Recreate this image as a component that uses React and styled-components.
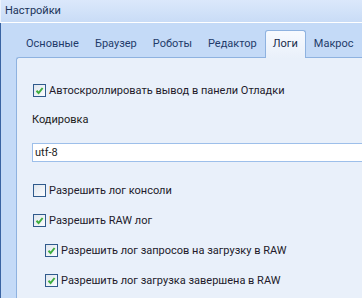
import React from 'react';
import styled, { createGlobalStyle } from 'styled-components';

const Global = createGlobalStyle`
    html, body { margin: 0; padding: 0; }
    body {
        width: 362px;
        height: 298px;
        overflow: hidden;
        background: #e9f0fa;
        font-family: Roboto, "Liberation Sans", sans-serif;
        font-size: 11px;
        color: #222;
    }
`;

const tabs = ['Основные', 'Браузер', 'Роботы', 'Редактор', 'Логи', 'Макрос'];

const Check = ({ checked }) => (
    <Box>
        {checked && (
            <svg width="9" height="9" viewBox="0 0 9 9">
                <path d="M1.5 4.8 L3.6 7 L7.6 2" fill="none" stroke="#3fae3f" strokeWidth="2" />
            </svg>
        )}
    </Box>
);

const Option = ({ checked, nested, children }) => (
    <Row nested={nested}>
        <Check checked={checked} />
        <Label>{children}</Label>
    </Row>
);

export default () => {
    return (
        <Window>
            <Global />
            <TitleBar>Настройки</TitleBar>
            <Body>
                <TabStrip>
                    {tabs.map(tab => (
                        <Tab key={tab} active={tab === 'Логи'}>
                            {tab}
                        </Tab>
                    ))}
                </TabStrip>
                <Panel>
                    <Option checked>Автоскроллировать вывод в панели Отладки</Option>
                    <Caption>Кодировка</Caption>
                    <Input>utf-8</Input>
                    <Option>Разрешить лог консоли</Option>
                    <Option checked>Разрешить RAW лог</Option>
                    <Option checked nested>
                        Разрешить лог запросов на загрузку в RAW
                    </Option>
                    <Option checked nested>
                        Разрешить лог загрузка завершена в RAW
                    </Option>
                </Panel>
            </Body>
        </Window>
    );
};

const Window = styled.div`
    display: flex;
    flex-direction: column;
    width: 362px;
    height: 298px;
    overflow: hidden;
`;

const TitleBar = styled.div`
    height: 23px;
    flex: none;
    box-sizing: border-box;
    padding: 2px 0 0 4px;
    line-height: 18px;
    color: #1b3358;
    background: linear-gradient(#dbe8fb, #c9dcf6);
    border-left: 1px solid #edf3fc;
    border-bottom: 1px solid #ffffff;
`;

const Body = styled.div`
    flex: 1;
    display: flex;
    flex-direction: column;
    background: #c4daf7;
    border-left: 1px solid #3a64a3;
    padding-left: 15px;
`;

const TabStrip = styled.div`
    display: flex;
    align-items: flex-end;
    height: 34px;
    padding-left: 2px;
    flex: none;
`;

const Tab = styled.div`
    box-sizing: border-box;
    height: ${p => (p.active ? '28px' : '26px')};
    padding: 0 7px;
    margin-bottom: ${p => (p.active ? '-1px' : '0')};
    line-height: ${p => (p.active ? '26px' : '24px')};
    color: ${p => (p.active ? '#15294a' : '#1f3a6a')};
    white-space: nowrap;
    border: 1px solid ${p => (p.active ? '#8eb2e0' : 'transparent')};
    border-bottom: none;
    border-radius: 3px 3px 0 0;
    background: ${p => (p.active ? 'linear-gradient(#f7faff, #e9f0fa)' : 'transparent')};
    position: relative;
    z-index: 1;
`;

const Panel = styled.div`
    flex: 1;
    background: #e9f0fa;
    border-left: 1px solid #8eb2e0;
    border-top: 1px solid #8eb2e0;
    border-top-left-radius: 3px;
    padding: 17px 0 0 15px;
    display: flex;
    flex-direction: column;
`;

const Row = styled.div`
    display: flex;
    align-items: center;
    height: 30px;
    flex: none;
    margin-left: ${p => (p.nested ? '13px' : '1px')};
`;

const Box = styled.span`
    box-sizing: border-box;
    width: 13px;
    height: 13px;
    flex: none;
    border: 1px solid #2f5a8c;
    background: linear-gradient(135deg, #dfe6ee, #fbfcfd);
    display: flex;
    align-items: center;
    justify-content: center;
    margin-right: 3px;
`;

const Label = styled.span`
    color: #221a2a;
    white-space: nowrap;
`;

const Caption = styled.div`
    margin-top: 5px;
    height: 20px;
    line-height: 20px;
    flex: none;
`;

const Input = styled.div`
    margin-top: 13px;
    height: 19px;
    flex: none;
    box-sizing: border-box;
    border: 1px solid #9dbfea;
    border-right: none;
    background: #fff;
    padding-left: 2px;
    line-height: 17px;
    margin-bottom: 13px;
`;
